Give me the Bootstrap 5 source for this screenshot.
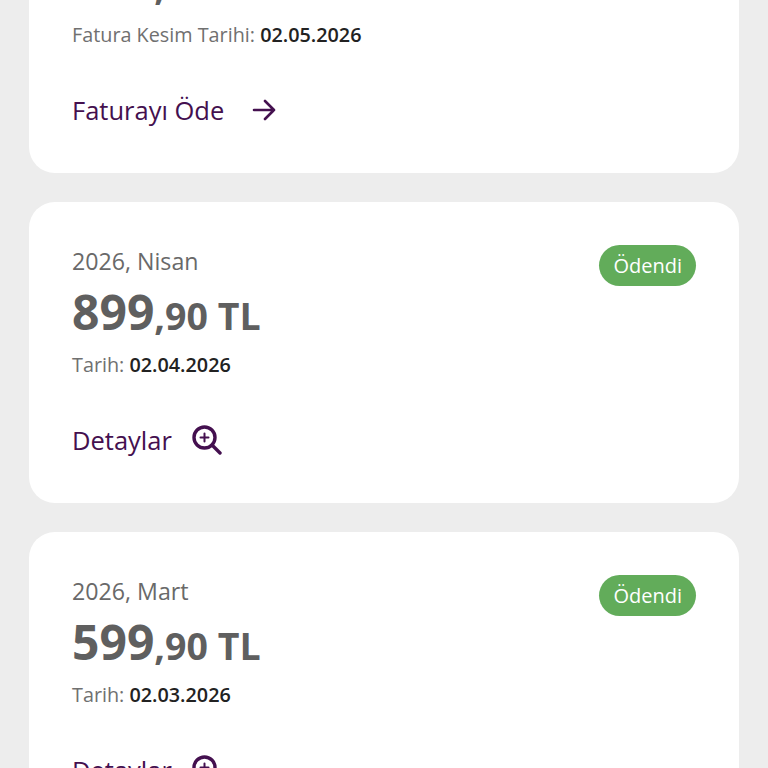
<!DOCTYPE html>
<html lang="tr">
<head>
  <meta charset="utf-8">
  <title>Faturalar</title>
  <link href="https://cdn.jsdelivr.net/npm/bootstrap@5.3.0/dist/css/bootstrap.min.css" rel="stylesheet">
  <style>
    html, body {
      height: 768px;
      overflow: hidden;
    }
    body {
      background-color: #ededed;
      font-family: "Open Sans", "Liberation Sans", sans-serif;
    }
    .bill-list {
      margin-top: -128px;
      padding: 0 29px;
      gap: 29px;
    }
    .bill-card {
      background-color: #fff;
      border-radius: 26px;
      height: 301px;
      padding: 43px 43px 0;
      flex-shrink: 0;
    }
    .bill-month {
      color: #696969;
      font-size: 23.2px;
      line-height: 32px;
    }
    .bill-amount {
      color: #5f5f5f;
      font-size: 37.5px;
      font-weight: 700;
      line-height: 58px;
      margin-top: 6px;
    }
    .bill-amount b {
      font-size: 48px;
      font-weight: 700;
    }
    .bill-date {
      color: #707070;
      font-size: 19.8px;
      line-height: 28px;
      margin-top: 6px;
    }
    .bill-date b {
      color: #222;
      font-weight: 600;
    }
    .bill-link {
      color: #44104f;
      font-size: 25.5px;
      line-height: 34px;
      margin-top: 44px;
      gap: 20px;
      text-decoration: none;
    }
    .bill-link-arrow {
      gap: 28px;
    }
    .bill-status {
      background-color: #62ac5a;
      color: #fff;
      border-radius: 21px;
      font-size: 20px;
      height: 41px;
      padding: 0 14px;
    }
  </style>
</head>
<body>

<div class="bill-list d-flex flex-column">

  <div class="bill-card">
    <div class="d-flex justify-content-between align-items-start">
      <div>
        <div class="bill-month">2026, Mayıs</div>
        <div class="bill-amount"><b>899</b>,90 TL</div>
        <div class="bill-date">Fatura Kesim Tarihi: <b>02.05.2026</b></div>
      </div>
    </div>
    <a href="#" class="bill-link bill-link-arrow d-inline-flex align-items-center">
      Faturayı Öde
      <svg width="24" height="24" viewBox="0 0 24 24" fill="none" stroke="#44104f" stroke-width="2.6" stroke-linecap="round" stroke-linejoin="round"><path d="M2 12h20M13 3l9 9-9 9"/></svg>
    </a>
  </div>

  <div class="bill-card">
    <div class="d-flex justify-content-between align-items-start">
      <div>
        <div class="bill-month">2026, Nisan</div>
        <div class="bill-amount"><b>899</b>,90 TL</div>
        <div class="bill-date">Tarih: <b>02.04.2026</b></div>
      </div>
      <span class="bill-status d-inline-flex align-items-center">Ödendi</span>
    </div>
    <a href="#" class="bill-link d-inline-flex align-items-center">
      Detaylar
      <svg width="30" height="30" viewBox="0 0 30 30" fill="none" stroke="#44104f" stroke-width="3.4" stroke-linecap="round"><circle cx="12.5" cy="12.5" r="10.5"/><path d="M20 20l8 8"/><path stroke-width="2" d="M12.5 8.5v8M8.5 12.5h8"/></svg>
    </a>
  </div>

  <div class="bill-card">
    <div class="d-flex justify-content-between align-items-start">
      <div>
        <div class="bill-month">2026, Mart</div>
        <div class="bill-amount"><b>599</b>,90 TL</div>
        <div class="bill-date">Tarih: <b>02.03.2026</b></div>
      </div>
      <span class="bill-status d-inline-flex align-items-center">Ödendi</span>
    </div>
    <a href="#" class="bill-link d-inline-flex align-items-center">
      Detaylar
      <svg width="30" height="30" viewBox="0 0 30 30" fill="none" stroke="#44104f" stroke-width="3.4" stroke-linecap="round"><circle cx="12.5" cy="12.5" r="10.5"/><path d="M20 20l8 8"/><path stroke-width="2" d="M12.5 8.5v8M8.5 12.5h8"/></svg>
    </a>
  </div>

</div>

<script src="https://cdn.jsdelivr.net/npm/bootstrap@5.3.0/dist/js/bootstrap.bundle.min.js"></script>
</body>
</html>
